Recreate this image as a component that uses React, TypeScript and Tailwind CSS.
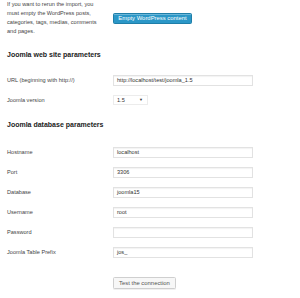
import React from "react";

const dbFields: { label: string; value: string }[] = [
  { label: "Hostname", value: "localhost" },
  { label: "Port", value: "3306" },
  { label: "Database", value: "joomla15" },
  { label: "Username", value: "root" },
  { label: "Password", value: "" },
  { label: "Joomla Table Prefix", value: "jos_" },
];

function Field({ value }: { value: string }) {
  return (
    <div className="w-[140px] h-[11px] border border-[#e2e2e2] bg-white shadow-[inset_0_1px_1px_rgba(0,0,0,0.05)] flex items-center pl-[3px] text-[5.6px] text-[#333]">
      {value}
    </div>
  );
}

function Row({ label, children }: { label: string; children: React.ReactNode }) {
  return (
    <div className="flex items-center h-[20px]">
      <div className="w-[106px] text-[5.6px] text-[#444]">{label}</div>
      {children}
    </div>
  );
}

export default function App() {
  return (
    <div
      className="w-[300px] h-[298px] bg-white px-[7px] overflow-hidden"
      style={{ fontFamily: '"Liberation Sans", Arial, sans-serif' }}
    >
      <div className="flex items-center">
        <p className="w-[106px] text-[5.6px] leading-[9px] text-[#444]">
          If you want to rerun the import, you
          <br />
          must empty the WordPress posts,
          <br />
          categories, tags, medias, comments
          <br />
          and pages.
        </p>
        <button className="mt-[1px] h-[11px] w-[79px] rounded-[1.5px] border border-[#1f7ea8] bg-[#2b97c7] text-white text-[5.9px] shadow-[inset_0_1px_0_rgba(255,255,255,0.3)]">
          Empty WordPress content
        </button>
      </div>

      <h2 className="mt-[14px] h-[10px] leading-[10px] text-[7px] font-bold text-[#222]">
        Joomla web site parameters
      </h2>

      <div className="mt-[10px]">
        <Row label="URL (beginning with http://)">
          <Field value="http://localhost/test/joomla_1.5" />
        </Row>
        <Row label="Joomla version">
          <div className="w-[35px] h-[10px] border border-[#ececec] bg-white flex items-center justify-between pl-[3px] pr-[4px] text-[5.6px] text-[#333]">
            <span>1.5</span>
            <span className="text-[4px]">▼</span>
          </div>
        </Row>
      </div>

      <h2 className="mt-[10px] h-[10px] leading-[10px] text-[7px] font-bold text-[#222]">
        Joomla database parameters
      </h2>

      <div className="mt-[12px]">
        {dbFields.map((f) => (
          <Row key={f.label} label={f.label}>
            <Field value={f.value} />
          </Row>
        ))}
      </div>

      <div className="mt-[15px] pl-[106px] flex">
        <button className="h-[12px] w-[63px] rounded-[1.5px] border border-[#cfcfcf] bg-[#f7f7f7] text-[5.9px] text-[#555] shadow-[0_1px_0_rgba(0,0,0,0.06)]">
          Test the connection
        </button>
      </div>
    </div>
  );
}
